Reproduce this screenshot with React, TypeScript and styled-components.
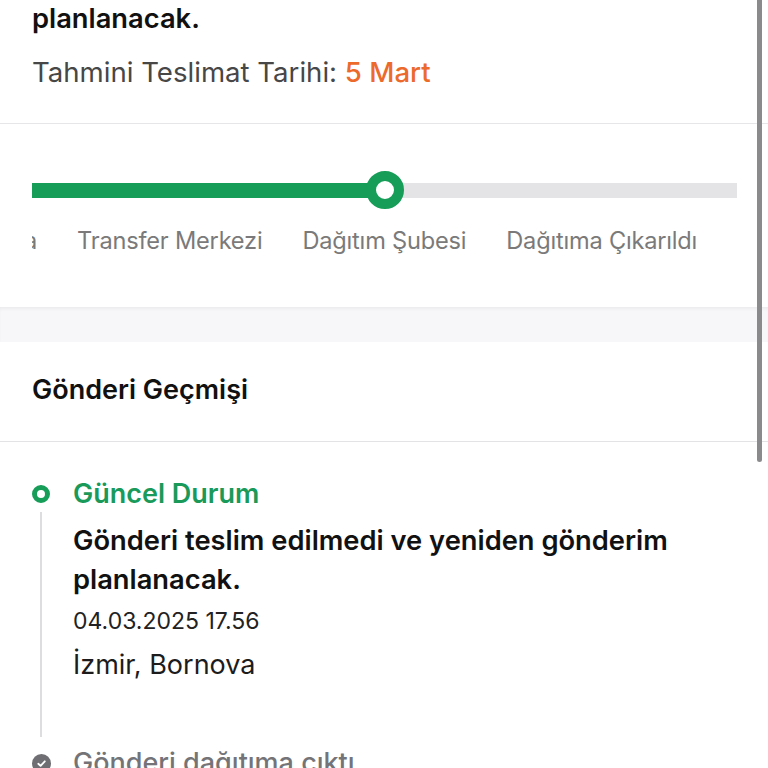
import React from "react";
import styled, { createGlobalStyle } from "styled-components";

const GlobalStyle = createGlobalStyle`
  html, body { margin: 0; padding: 0; background: #ffffff; overflow: hidden; }
  body { font-family: Inter, "Noto Sans", "DejaVu Sans", sans-serif; -webkit-font-smoothing: antialiased; }
  * { box-sizing: border-box; }
`;

const Screen = styled.div`
  position: relative;
  width: 768px;
  height: 768px;
  overflow: hidden;
  background: #ffffff;
`;

const Summary = styled.section`
  padding: 0 32px 32px;
  border-bottom: 1px solid #e6e6e8;
`;

const BoldLine = styled.div`
  font-size: 27.3px;
  line-height: 38px;
  font-weight: 600;
  color: #111111;
`;

const EtaLine = styled.div`
  margin-top: 15px;
  font-size: 27.6px;
  line-height: 38px;
  color: #474747;
`;

const EtaDate = styled.span`
  color: #ec6a2c;
  font-weight: 500;
`;

const ProgressSection = styled.section`
  padding: 47px 31px 51px 32px;
`;

const TrackRow = styled.div`
  position: relative;
  height: 38px;
  display: flex;
  align-items: center;
`;

const Track = styled.div`
  width: 100%;
  height: 15px;
  background: #e4e4e6;
  display: flex;
`;

const Fill = styled.div<{ $w: number }>`
  width: ${(p) => p.$w}px;
  height: 100%;
  background: #169d58;
`;

const Knob = styled.div<{ $x: number }>`
  position: absolute;
  top: 0;
  left: ${(p) => p.$x - 19}px;
  width: 38px;
  height: 38px;
  border-radius: 50%;
  border: 10px solid #169d58;
  background: #ffffff;
`;

const Labels = styled.div`
  margin-top: 17px;
  display: flex;
  gap: 40px;
  overflow: hidden;
  white-space: nowrap;
`;

const StepLabel = styled.div`
  flex: none;
  font-size: 23.6px;
  line-height: 30px;
  color: #7a7a7a;
  letter-spacing: -0.2px;
`;

const ClippedStep = styled(StepLabel)`
  width: 5px;
  overflow: hidden;
  display: flex;
  justify-content: flex-end;
`;

const Band = styled.div`
  height: 35px;
  background: #f7f7f9;
  box-shadow: inset 0 3px 4px -2px rgba(0, 0, 0, 0.07);
`;

const HistoryHeader = styled.header`
  padding: 33px 32px 36px;
  border-bottom: 1px solid #e3e3e5;
`;

const HistoryTitle = styled.h2`
  margin: 0;
  font-size: 27px;
  line-height: 30px;
  font-weight: 600;
  color: #111111;
`;

const Timeline = styled.div`
  padding: 36px 32px 0;
`;

const Item = styled.div`
  display: grid;
  grid-template-columns: 18px 1fr;
  column-gap: 23px;
`;

const Marker = styled.div`
  display: flex;
  flex-direction: column;
  align-items: center;
`;

const Dot = styled.div`
  margin-top: 7px;
  width: 18px;
  height: 18px;
  border-radius: 50%;
  border: 5px solid #169d58;
  background: #ffffff;
`;

const DoneIcon = styled.div`
  margin-top: 7px;
  width: 19px;
  height: 19px;
  border-radius: 50%;
  background: #6f6f73;
  display: flex;
  align-items: center;
  justify-content: center;
`;

const Rail = styled.div`
  flex: 1;
  width: 2px;
  margin: 9px 0 10px;
  background: #dddddf;
`;

const Content = styled.div<{ $pad: number }>`
  padding-bottom: ${(p) => p.$pad}px;
`;

const ItemTitle = styled.div<{ $active?: boolean }>`
  font-size: 27px;
  line-height: 32px;
  font-weight: ${(p) => (p.$active ? 600 : 500)};
  color: ${(p) => (p.$active ? "#199a5a" : "#747478")};
  white-space: nowrap;
`;

const ItemText = styled.div`
  margin-top: 11px;
  font-size: 27.3px;
  line-height: 39px;
  font-weight: 600;
  color: #111111;
`;

const ItemDate = styled.div`
  margin-top: 4px;
  font-size: 23px;
  line-height: 36px;
  color: #222222;
`;

const ItemPlace = styled.div`
  margin-top: 8px;
  font-size: 27px;
  line-height: 36px;
  color: #1c1c1c;
`;

const ScrollThumb = styled.div`
  position: absolute;
  top: -6px;
  right: 6px;
  width: 5px;
  height: 468px;
  border-radius: 3px;
  background: #8a8a8c;
`;

const steps = ["Yolda", "Transfer Merkezi", "Dağıtım Şubesi", "Dağıtıma Çıkarıldı"];

export default function App() {
  const progress = 353;
  return (
    <Screen>
      <GlobalStyle />
      <Summary>
        <BoldLine>planlanacak.</BoldLine>
        <EtaLine>
          Tahmini Teslimat Tarihi: <EtaDate>5 Mart</EtaDate>
        </EtaLine>
      </Summary>

      <ProgressSection>
        <TrackRow>
          <Track>
            <Fill $w={progress} />
          </Track>
          <Knob $x={progress} />
        </TrackRow>
        <Labels>
          <ClippedStep>
            <span>{steps[0]}</span>
          </ClippedStep>
          {steps.slice(1).map((s) => (
            <StepLabel key={s}>{s}</StepLabel>
          ))}
        </Labels>
      </ProgressSection>

      <Band />

      <HistoryHeader>
        <HistoryTitle>Gönderi Geçmişi</HistoryTitle>
      </HistoryHeader>

      <Timeline>
        <Item>
          <Marker>
            <Dot />
            <Rail />
          </Marker>
          <Content $pad={64}>
            <ItemTitle $active>Güncel Durum</ItemTitle>
            <ItemText>Gönderi teslim edilmedi ve yeniden gönderim planlanacak.</ItemText>
            <ItemDate>04.03.2025 17.56</ItemDate>
            <ItemPlace>İzmir, Bornova</ItemPlace>
          </Content>
        </Item>
        <Item>
          <Marker>
            <DoneIcon>
              <svg width="11" height="11" viewBox="0 0 12 12">
                <path d="M2.5 6.3 L5 8.6 L9.6 3.6" fill="none" stroke="#ffffff" strokeWidth="2" strokeLinecap="round" strokeLinejoin="round" />
              </svg>
            </DoneIcon>
          </Marker>
          <Content $pad={40}>
            <ItemTitle>Gönderi dağıtıma çıktı</ItemTitle>
          </Content>
        </Item>
      </Timeline>

      <ScrollThumb />
    </Screen>
  );
}
